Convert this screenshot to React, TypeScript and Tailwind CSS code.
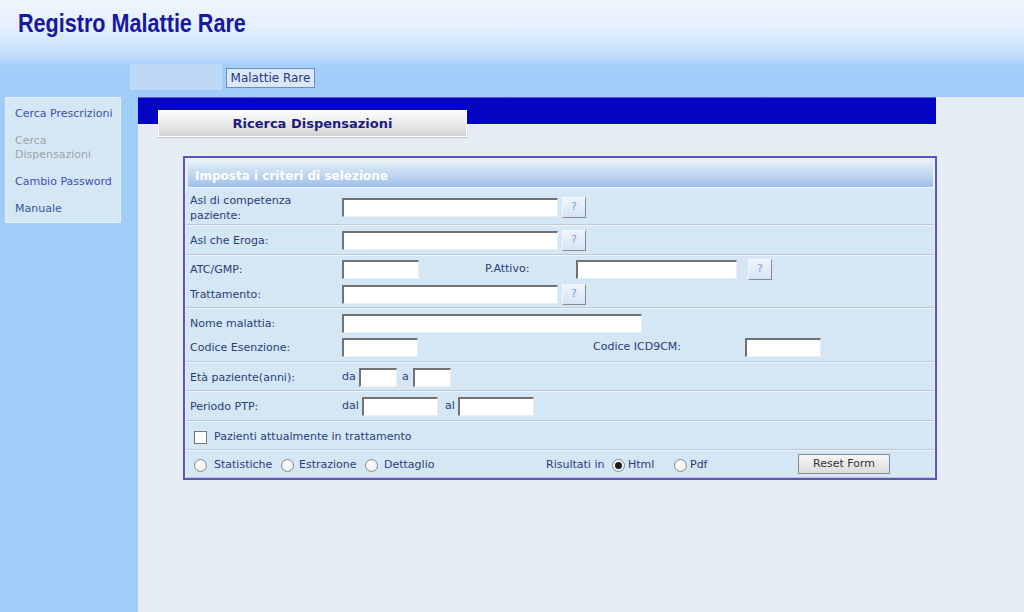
import React from "react";

const Inp = ({ className }: { className: string }) => (
  <div
    className={
      "h-[19px] shrink-0 bg-white border-t-2 border-l-2 border-b border-r border-t-[#727272] border-l-[#727272] border-b-[#eeeeee] border-r-[#eeeeee] " +
      className
    }
  />
);

const Q = () => (
  <div className="ml-[4px] flex h-[21px] w-[24px] shrink-0 items-center justify-center border border-t-[#f4f8fc] border-l-[#f4f8fc] border-b-[#8a8a8a] border-r-[#8a8a8a] bg-[linear-gradient(to_bottom,#eef4fc,#d6e4f6)] text-[11px] text-[#7e9ed2]">
    ?
  </div>
);

const Radio = ({ checked }: { checked?: boolean }) => (
  <div className="flex h-[13px] w-[13px] shrink-0 items-center justify-center rounded-full border border-[#8a8a8a] bg-[radial-gradient(circle_at_40%_35%,#ffffff,#e6e6e6)]">
    {checked && <div className="h-[7px] w-[7px] rounded-full bg-[#1a1a1a]" />}
  </div>
);

const Row = ({ className, children }: { className: string; children: React.ReactNode }) => (
  <div className={"border-t border-b border-t-[#eef4fa] border-b-[#bccad8] bg-[#d5e6f4] " + className}>
    {children}
  </div>
);

const Label = ({ children }: { children: React.ReactNode }) => (
  <div className="w-[156px] shrink-0 pl-[4px] leading-[15px]">{children}</div>
);

export default function App() {
  return (
    <div className="flex h-[612px] w-[1024px] flex-col overflow-hidden font-['DejaVu_Sans',Verdana,sans-serif] text-[11px] text-[#283e7a]">
      {/* Header */}
      <div className="h-[97px] shrink-0 bg-[linear-gradient(to_bottom,#f0f6fd_0%,#e2effc_30%,#c4dffa_55%,#a4cef9_68%,#a0ccf8_100%)]">
        <div className="h-[64px] pl-[18px] pt-[8px]">
          <div className="h-[30px] w-[300px] origin-left scale-x-[0.83] font-['Liberation_Sans',Arial,sans-serif] text-[26px] font-bold leading-[30px] text-[#1717a0]">
            Registro Malattie Rare
          </div>
        </div>
        <div className="flex h-[33px]">
          <div className="ml-[130px] h-[26px] w-[92px] bg-[#bcd8f6]" />
          <div className="ml-[4px] mt-[4px] flex h-[20px] w-[89px] items-center justify-center border border-[#6a8cc8] bg-[#dbe9f7] text-[12px] text-[#26388a]">
            Malattie Rare
          </div>
        </div>
      </div>

      {/* Body */}
      <div className="flex flex-1">
        {/* Sidebar */}
        <div className="w-[138px] shrink-0 bg-[#a0ccf8]">
          <div className="ml-[5px] flex h-[126px] w-[116px] flex-col gap-[13px] border border-[#e4effa] bg-[#d5e7f7] pl-[9px] pt-[9px] leading-[14px]">
            <div className="text-[#3553a6]">Cerca Prescrizioni</div>
            <div className="text-[#a3a3a3]">
              Cerca
              <br />
              Dispensazioni
            </div>
            <div className="text-[#3553a6]">Cambio Password</div>
            <div className="text-[#3553a6]">Manuale</div>
          </div>
        </div>

        {/* Main */}
        <div className="flex-1 bg-[#e6ecf4]">
          <div className="h-[27px] w-[798px] border-t border-[#5a5ad6] bg-[#0404c2]" />
          <div className="relative ml-[20px] mt-[-14px] flex h-[27px] w-[309px] items-center justify-center border border-white bg-[linear-gradient(to_bottom,#fdfdfd,#e6e6e6_60%,#d2d2d2)] text-[13px] font-bold text-[#1b1b82] shadow-[0_1px_1px_rgba(0,0,0,0.15)]">
            Ricerca Dispensazioni
          </div>

          {/* Fieldset */}
          <div className="ml-[45px] mt-[19px] w-[754px] border-2 border-[#5d55b8] bg-[#e9eff7] px-px pt-[5px]">
            <div className="ml-[2px] mr-[1px] flex h-[24px] items-center bg-[linear-gradient(to_bottom,#dcebf8,#c0d6f0_50%,#9ebfe8)] pl-[7px] pt-px text-[12px] font-bold text-white">
              Imposta i criteri di selezione
            </div>

            <Row className="flex h-[38px] items-center pt-[3px]">
              <Label>
                Asl di competenza
                <br />
                paziente:
              </Label>
              <Inp className="w-[216px]" />
              <Q />
            </Row>

            <Row className="flex h-[30px] items-center pt-px">
              <Label>Asl che Eroga:</Label>
              <Inp className="w-[216px]" />
              <Q />
            </Row>

            <Row className="flex h-[53px] flex-col gap-[4px] pt-[3px]">
              <div className="flex h-[21px] items-center">
                <Label>ATC/GMP:</Label>
                <Inp className="w-[77px]" />
                <div className="w-[157px] shrink-0 pl-[66px]">P.Attivo:</div>
                <Inp className="w-[161px]" />
                <div className="ml-[7px]">
                  <Q />
                </div>
              </div>
              <div className="flex h-[21px] items-center">
                <Label>Trattamento:</Label>
                <Inp className="w-[216px]" />
                <Q />
              </div>
            </Row>

            <Row className="flex h-[54px] flex-col gap-[3px] pt-[4px]">
              <div className="flex h-[21px] items-center">
                <Label>Nome malattia:</Label>
                <Inp className="w-[300px]" />
              </div>
              <div className="flex h-[21px] items-center">
                <Label>Codice Esenzione:</Label>
                <Inp className="w-[76px]" />
                <div className="w-[327px] shrink-0 pl-[175px]">Codice ICD9CM:</div>
                <Inp className="w-[76px]" />
              </div>
            </Row>

            <Row className="flex h-[29px] items-center pt-px">
              <Label>Età paziente(anni):</Label>
              <div className="w-[17px] shrink-0">da</div>
              <Inp className="w-[38px]" />
              <div className="w-[16px] shrink-0 pl-[5px]">a</div>
              <Inp className="w-[38px]" />
            </Row>

            <Row className="flex h-[30px] items-center pt-px">
              <Label>Periodo PTP:</Label>
              <div className="w-[20px] shrink-0">dal</div>
              <Inp className="w-[76px]" />
              <div className="w-[20px] shrink-0 pl-[7px]">al</div>
              <Inp className="w-[76px]" />
            </Row>

            <Row className="flex h-[29px] items-center pl-[8px] pt-[3px]">
              <div className="h-[13px] w-[13px] shrink-0 border border-[#767676] bg-white" />
              <div className="ml-[7px]">Pazienti attualmente in trattamento</div>
            </Row>

            <Row className="flex h-[28px] items-center pl-[8px] pt-[3px]">
              <div className="flex w-[87px] shrink-0 items-center">
                <Radio />
                <span className="ml-[7px]">Statistiche</span>
              </div>
              <div className="flex w-[84px] shrink-0 items-center">
                <Radio />
                <span className="ml-[5px]">Estrazione</span>
              </div>
              <div className="flex w-[181px] shrink-0 items-center">
                <Radio />
                <span className="ml-[6px]">Dettaglio</span>
              </div>
              <div className="w-[66px] shrink-0">Risultati in</div>
              <div className="flex w-[62px] shrink-0 items-center">
                <Radio checked />
                <span className="ml-[3px]">Html</span>
              </div>
              <div className="flex w-[124px] shrink-0 items-center">
                <Radio />
                <span className="ml-[3px]">Pdf</span>
              </div>
              <div className="mt-[-3px] flex h-[20px] w-[92px] shrink-0 items-center justify-center border border-[#8a8a8a] bg-[linear-gradient(to_bottom,#f6f6f6,#dcdcdc)] text-[#333333]">
                Reset Form
              </div>
            </Row>
          </div>
        </div>
      </div>
    </div>
  );
}
